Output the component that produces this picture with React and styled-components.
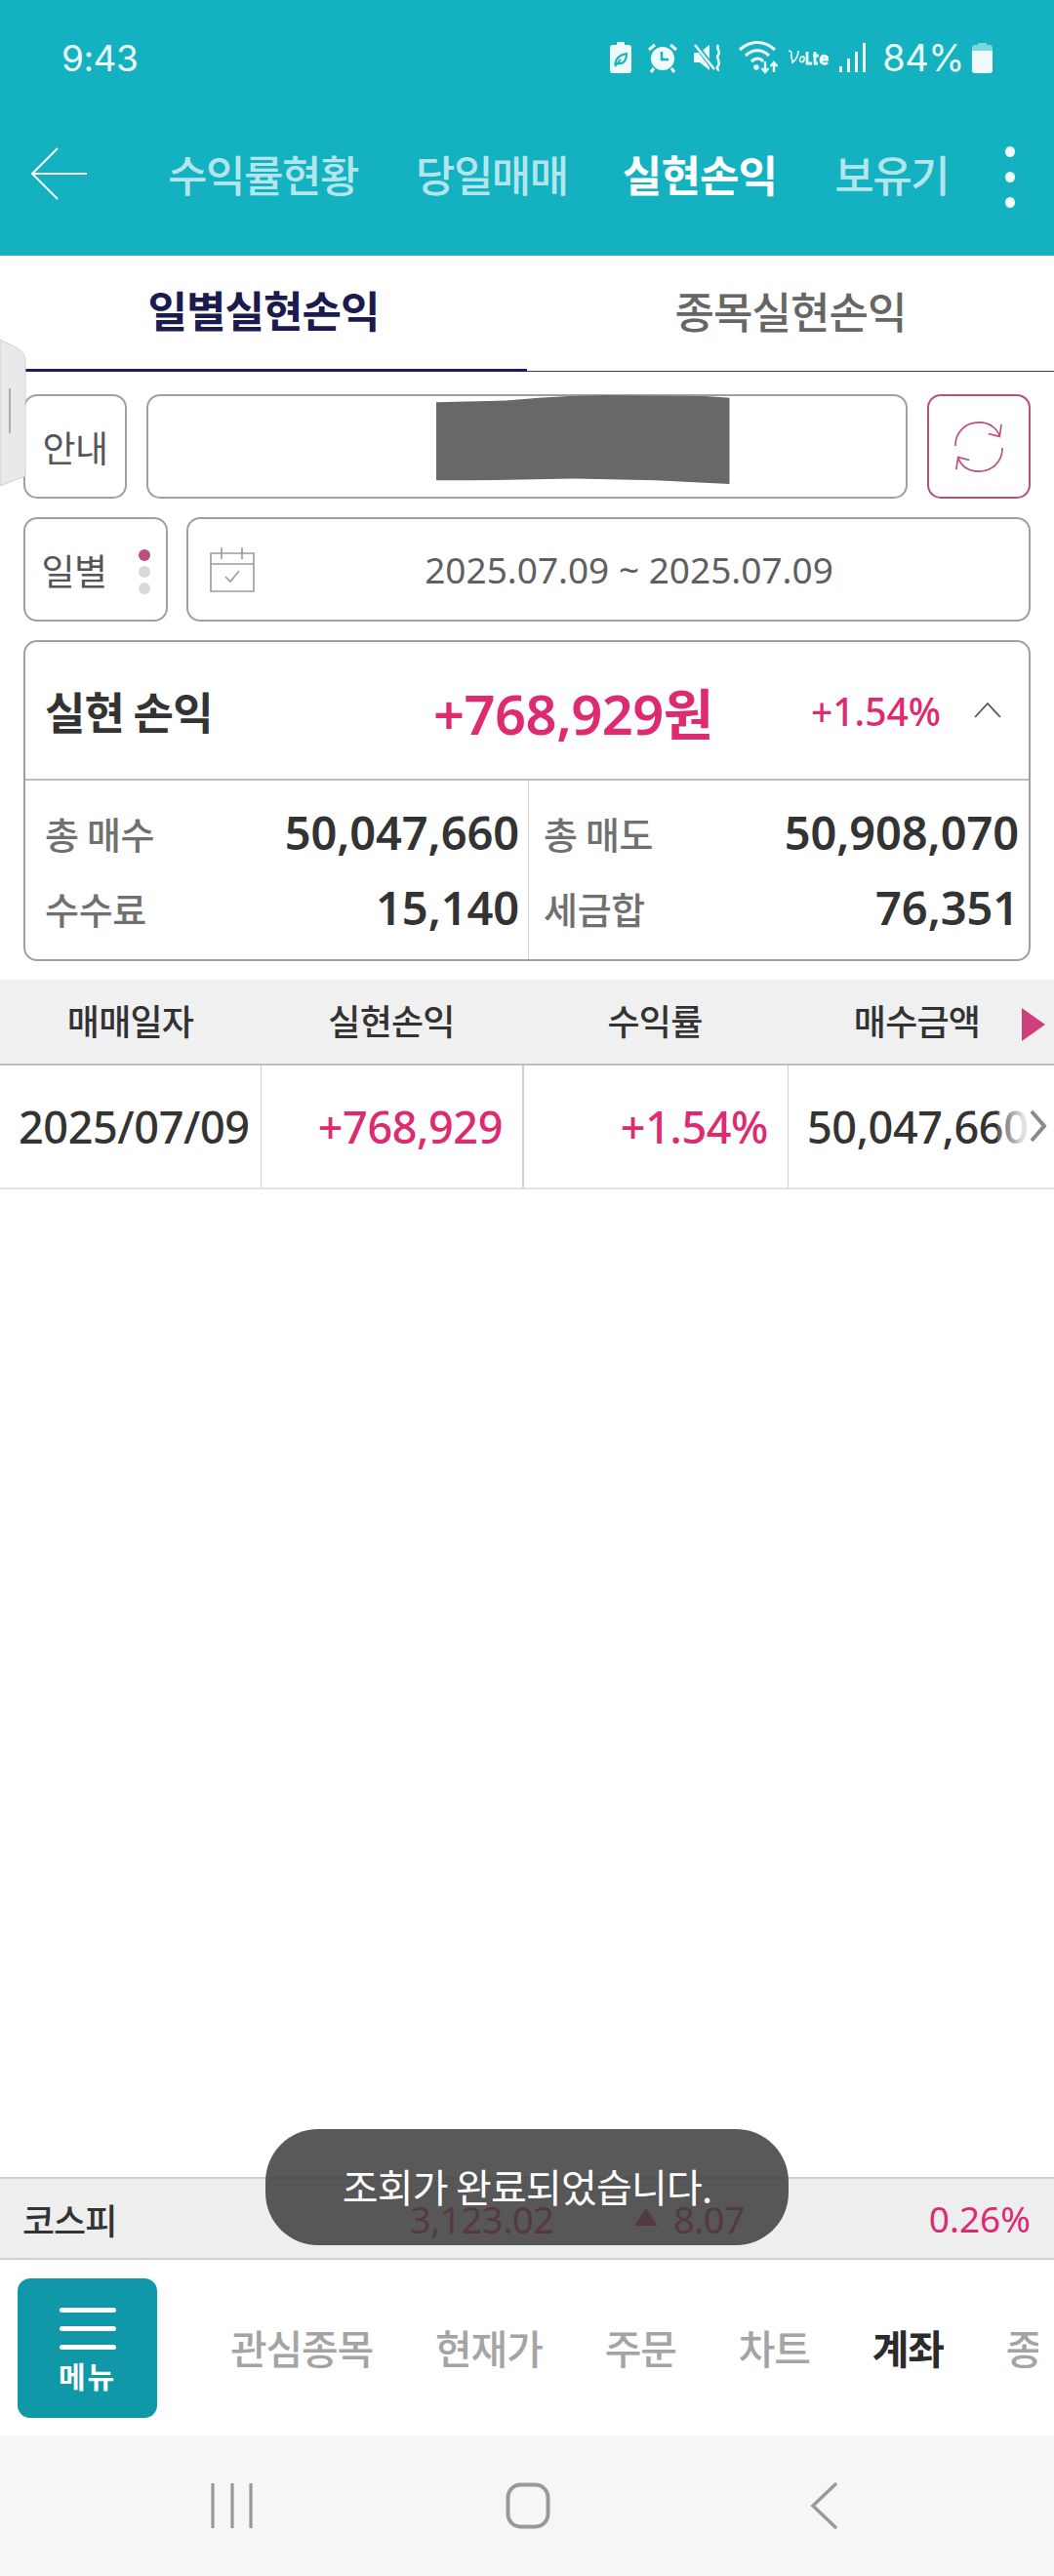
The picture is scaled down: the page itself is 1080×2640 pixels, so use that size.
import React from 'react';
import styled, { createGlobalStyle } from 'styled-components';

const Global = createGlobalStyle`
  html, body { margin: 0; padding: 0; background: #fff; }
  * { box-sizing: border-box; }
  body { font-family: "Noto Sans CJK KR", "Noto Sans", sans-serif; }
`;
const Page = styled.div`
  position: relative; width: 1080px; height: 2640px; overflow: hidden;
  display: flex; flex-direction: column; background: #fff;
`;
const Header = styled.header`height: 262px; background: #14b1c1; flex: none; display: flex; flex-direction: column;`;
const StatusBar = styled.div`height: 118px; display: flex; align-items: center; padding: 0 63px 0 63px;`;
const Time = styled.span`font: 400 37px/1 "Inter", sans-serif; color: #eafafb; flex: 1; letter-spacing: -0.5px;`;
const StatusIcons = styled.div`display: flex; align-items: center; height: 40px;`;
const Pct = styled.span`font: 400 38px/1 "Inter", sans-serif; color: #eafafb; margin: 0 8px 0 16px; letter-spacing: -0.5px;`;
const NavRow = styled.nav`height: 100px; display: flex; align-items: center; padding-left: 31px; margin-top: 10px; position: relative;`;
const BackIcon = styled.svg`width: 58px; height: 54px; flex: none; margin-right: 83px;`;
const NavTabs = styled.div`display: flex; gap: 59px; white-space: nowrap;`;
const NavTab = styled.span`
  font-size: 44px; line-height: 1; letter-spacing: ${p => (p.$on ? '-0.9px' : '-1.5px')};
  font-weight: ${p => (p.$on ? 700 : 500)};
  color: ${p => (p.$on ? '#ffffff' : '#b3e6ec')};
  margin-left: ${p => (p.$on ? '-3px' : '0')};
`;
const Dots = styled.div`position: absolute; left: 1030px; top: 22px; display: flex; flex-direction: column; gap: 15px;`;
const Dot = styled.i`width: 10px; height: 11px; border-radius: 50%; background: #f2fbfc; display: block;`;

const SubTabs = styled.div`height: 119px; display: flex; flex: none;`;
const SubTab = styled.div`
  width: 540px; display: flex; align-items: center; justify-content: center; padding-bottom: 6px;
  font-size: 44px; letter-spacing: -1px;
  font-weight: ${p => (p.$on ? 700 : 500)};
  color: ${p => (p.$on ? '#1c1b50' : '#666')};
  border-bottom: ${p => (p.$on ? '3px solid #1f1d57' : '1px solid #3d3c5a')};
  height: ${p => (p.$on ? '119px' : '118.5px')};
`;
const Body = styled.main`padding: 23px 24px 0; display: flex; flex-direction: column; gap: 19px; flex: none;`;
const Row = styled.div`display: flex; height: 107px; gap: ${p => p.$gap}px;`;
const Box = styled.div`
  border: 2px solid ${p => (p.$accent ? '#b94f7c' : '#a0a0a0')}; border-radius: 14px; background: #fff;
  display: flex; align-items: center; justify-content: center; flex: ${p => (p.$w ? `0 0 ${p.$w}px` : 1)};
  position: relative; font-size: 37px; color: #555; letter-spacing: -0.5px;
`;
const Redacted = styled.div`
  width: 301px; height: 91px; background: #686868; align-self: flex-start; margin: -1px 0 0 114px;
  clip-path: polygon(0 8%, 24% 6%, 35% 3%, 45% 1%, 58% 0, 92% 1%, 100% 3%, 100% 100%, 88% 98%, 75% 96%, 47% 94%, 12% 96%, 0 96%);
`;
const Ticks = styled.div`display: flex; flex-direction: column; gap: 5px; margin-left: 32px; margin-top: 4px;`;
const Tick = styled.i`width: 12px; height: 12px; border-radius: 50%; display: block; background: ${p => (p.$on ? '#bc5080' : '#d9d9d9')};`;
const DateField = styled.div`display: flex; align-items: center; width: 100%; padding-left: 22px;`;
const DateText = styled.span`flex: 1; text-align: center; font-size: 37px; color: #5f5f5f; letter-spacing: 0; font-family: "Noto Sans", sans-serif; padding-right: 26px;`;

const Card = styled.section`border: 2px solid #a0a0a0; border-radius: 14px; height: 329px; display: flex; flex-direction: column;`;
const CardHead = styled.div`height: 142px; display: flex; align-items: center; border-bottom: 2px solid #bdbdbd; padding: 0 28px 0 20px; flex: none;`;
const CardTitle = styled.h2`margin: 0; font-size: 45px; font-weight: 700; color: #333; letter-spacing: -0.8px; width: 398px;`;
const Gain = styled.span`font-size: 56px; font-weight: 600; color: #dd2a70; letter-spacing: -0.5px; width: 387px; font-family: "Noto Sans", "Noto Sans CJK KR", sans-serif;`;
const GainPct = styled.span`font-size: 39px; font-weight: 500; color: #dd2a70; font-family: "Noto Sans", sans-serif; flex: 1; letter-spacing: 0;`;
const CardGrid = styled.div`flex: 1; display: grid; grid-template-columns: 515px 1fr;`;
const Cell = styled.div`
  display: flex; flex-direction: column; justify-content: center; gap: 22px; padding: 0 ${p => (p.$r ? '10px' : '9px')} 0 ${p => (p.$r ? '15px' : '20px')};
  border-left: ${p => (p.$r ? '1px solid #d4d4d4' : 'none')};
`;
const Stat = styled.div`display: flex; justify-content: space-between; align-items: center; height: 55px;`;
const StatLabel = styled.span`font-size: 38px; font-weight: 500; color: #707070; letter-spacing: -0.3px;`;
const StatValue = styled.span`font: 600 47px/1 "Noto Sans", sans-serif; color: #333; letter-spacing: -0.1px;`;

const Table = styled.section`margin-top: 19px; flex: none;`;
const TableHead = styled.div`height: 88px; background: #f0f0f0; display: grid; grid-template-columns: 267px 268px 272px 273px; border-bottom: 2px solid #bdbdbd; position: relative;`;
const Th = styled.div`display: flex; align-items: center; justify-content: center; font-size: 36px; font-weight: 500; color: #333; letter-spacing: -0.8px; padding-bottom: 4px; padding-right: ${p => (p.$pad ? 8 : 0)}px;`;
const MoreArrow = styled.svg`position: absolute; right: 9px; top: 29px; width: 24px; height: 34px;`;
const TableRow = styled.div`height: 127px; display: grid; grid-template-columns: 267px 268px 272px 273px; border-bottom: 2px solid #e2e2e2; position: relative;`;
const Td = styled.div`
  display: flex; align-items: center; justify-content: ${p => (p.$left ? 'flex-start' : 'flex-end')};
  padding: 0 ${p => (p.$left ? 0 : 20)}px 0 ${p => (p.$left ? 19 : 0)}px;
  font: 500 45px/1 "Noto Sans", sans-serif; color: ${p => (p.$red ? '#dd2a70' : '#333')};
  border-left: ${p => (p.$line ? `${p.$line}px solid #cfcfcf` : 'none')}; overflow: hidden; white-space: nowrap; letter-spacing: -0.4px;
`;
const RowChevron = styled.svg`position: absolute; right: 0; top: 36px; width: 58px; height: 52px;`;
const Spacer = styled.div`flex: 1;`;

const Ticker = styled.div`height: 85px; flex: none; background: #eeeeee; border-top: 2px solid #cfcfcf; border-bottom: 2px solid #d2d2d2; display: flex; align-items: center; padding: 0 24px 0 23px;`;
const TickerName = styled.span`font-size: 36px; font-weight: 500; color: #333; letter-spacing: -1px; width: 397px;`;
const TickerVal = styled.span`font: 400 38px/1 "Noto Sans", sans-serif; color: #dd2a70; width: 230px; letter-spacing: -0.4px;`;
const TickerDelta = styled.span`font: 400 38px/1 "Noto Sans", sans-serif; color: #dd2a70; flex: 1; display: flex; align-items: center; gap: 16px; letter-spacing: -0.6px;`;
const TriUp = styled.i`width: 0; height: 0; border-left: 12px solid transparent; border-right: 12px solid transparent; border-bottom: 18px solid #dd2a70; display: block; margin-top: -4px;`;
const TickerPct = styled.span`font: 400 37px/1 "Noto Sans", sans-serif; color: #dd2a70;`;

const BottomBar = styled.div`height: 180px; flex: none; display: flex; align-items: center; padding: 0 16px 0 18px; overflow: hidden;`;
const MenuBtn = styled.div`width: 143px; height: 143px; border-radius: 13px; background: #1097a8; flex: none; display: flex; flex-direction: column; align-items: center; color: #fff; padding-top: 30px; margin-right: 75px;`;
const Bar = styled.i`width: 58px; height: 5px; border-radius: 3px; background: #fff; display: block; margin-bottom: 14px;`;
const MenuLabel = styled.span`font-size: 30px; font-weight: 700; line-height: 1; letter-spacing: 2px; margin-top: -3px;`;
const BottomTabs = styled.div`display: flex; flex: 1; min-width: 0; overflow: hidden; gap: 64px; white-space: nowrap; margin-top: -3px;`;
const BottomTab = styled.span`font-size: 41px; letter-spacing: -1.2px; font-weight: ${p => (p.$on ? 700 : 500)}; color: ${p => (p.$on ? '#2b2b2b' : '#a4a4a4')};`;
const SysNav = styled.div`height: 144px; flex: none; background: #f5f6f8; display: flex; align-items: center;`;
const SysSlot = styled.div`flex: none; width: ${p => p.$w}px; display: flex; padding-left: ${p => p.$l || 0}px;`;

const Handle = styled.svg`position: absolute; left: 0; top: 348px; width: 28px; height: 150px;`;
const Toast = styled.div`
  position: absolute; left: 272px; top: 2182px; width: 536px; height: 119px; border-radius: 54px;
  background: rgba(60,60,60,0.85); color: #fff; display: flex; justify-content: center; padding-top: 34px;
  font-size: 40px; line-height: 1.2; letter-spacing: -0.8px; font-weight: 400;
`;

const c = '#eefafb';
const App = () => (
  <Page>
    <Global />
    <Header>
      <StatusBar>
        <Time>9:43</Time>
        <StatusIcons>
          <svg width="24" height="34" viewBox="0 0 24 34"><path d="M8 1h8v3h4a3 3 0 0 1 3 3v23a3 3 0 0 1-3 3H4a3 3 0 0 1-3-3V7a3 3 0 0 1 3-3h4z" fill={c}/><path d="M6 24c1-6 5-10 12-11 0 7-3 11-9 10M6 26l6-7" fill="none" stroke="#14b1c1" strokeWidth="2"/></svg>
          <svg style={{marginLeft:15}} width="32" height="32" viewBox="0 0 32 32"><circle cx="16" cy="17" r="12" fill={c}/><path d="M2 8l6-5M30 8l-6-5M7 27l-3 4M25 27l3 4" stroke={c} strokeWidth="3" fill="none"/><path d="M15 10v8h7" stroke="#14b1c1" strokeWidth="2.5" fill="none"/></svg>
          <svg style={{marginLeft:15}} width="32" height="32" viewBox="0 0 32 32"><path d="M1 11h6l10-8v26l-10-8H1z" fill={c}/><path d="M2 2l20 26" stroke="#14b1c1" strokeWidth="5"/><path d="M2 3l20 25" stroke={c} strokeWidth="2.5"/><path d="M26 3c-3 4 3 6 0 10s3 7 0 11 1 5 1 5" fill="none" stroke={c} strokeWidth="2.5"/></svg>
          <svg style={{marginLeft:14}} width="42" height="36" viewBox="0 0 42 36"><path d="M2 10c11-10 25-10 36 0M8 16c7-7 17-7 24 0M14 22c4-4 9-4 12 0" fill="none" stroke={c} strokeWidth="3.2"/><circle cx="19" cy="28" r="2.8" fill={c}/><path d="M28 22v11M24.500 29l3.500 4 3.500-4M37 33V23M33.500 27l3.500-4 3.500 4" fill="none" stroke={c} strokeWidth="2.4"/></svg>
          <svg style={{marginLeft:9}} width="42" height="22" viewBox="0 0 42 22"><path d="M1 4c3 0 3 2 3 6l1 6c4-3 6-7 6-12M13 12c-2 4 3 5 4 1s-3-4-4-1" fill="none" stroke={c} strokeWidth="1.6"/><path d="M20 5v12h5M28 5v12h3M26 9h6M34 13h7c0-5-7-5-7 0s5 5 7 3" fill="none" stroke={c} strokeWidth="2.8"/></svg>
          <svg style={{marginLeft:11}} width="28" height="30" viewBox="0 0 28 30"><rect x="0" y="24" width="3" height="6" fill={c}/><rect x="8" y="16" width="3" height="14" fill={c}/><rect x="16" y="9" width="3" height="21" fill={c}/><rect x="24" y="0" width="3" height="30" fill={c}/></svg>
          <Pct>84%</Pct>
          <svg width="21" height="31" viewBox="0 0 21 31"><path d="M6 0h9v2h3a3 3 0 0 1 3 3v3H0V5a3 3 0 0 1 3-3h3z" fill="#7fd5de"/><path d="M0 8h21v20a3 3 0 0 1-3 3H3a3 3 0 0 1-3-3z" fill={c}/></svg>
        </StatusIcons>
      </StatusBar>
      <NavRow>
        <BackIcon viewBox="0 0 58 54"><path d="M28 1L2 27l26 26M2 27h56" fill="none" stroke="#fff" strokeWidth="2"/></BackIcon>
        <NavTabs>
          <NavTab>수익률현황</NavTab><NavTab>당일매매</NavTab><NavTab $on>실현손익</NavTab><NavTab>보유기</NavTab>
        </NavTabs>
        <Dots><Dot /><Dot /><Dot /></Dots>
      </NavRow>
    </Header>
    <SubTabs>
      <SubTab $on>일별실현손익</SubTab><SubTab>종목실현손익</SubTab>
    </SubTabs>
    <Body>
      <Row $gap={20}>
        <Box $w={106}>안내</Box>
        <Box><Redacted /></Box>
        <Box $w={106} $accent>
          <svg width="54" height="56" viewBox="0 0 56 56"><path d="M3 27C3 12 14 2 28 2c10 0 18 5 22 14M53 29c0 15-11 25-25 25-10 0-18-5-22-14" fill="none" stroke="#b94f7c" strokeWidth="1.7"/><path d="M52 4l-2 13-12-3M4 52l2-13 12 3" fill="none" stroke="#b94f7c" strokeWidth="1.7"/></svg>
        </Box>
      </Row>
      <Row $gap={19}>
        <Box $w={148}>일별<Ticks><Tick $on /><Tick /><Tick /></Ticks></Box>
        <Box>
          <DateField>
            <svg width="46" height="46" viewBox="0 0 46 46"><path d="M1 6h44v39H1zM1 17h44M12 0v12M33 0v12" fill="none" stroke="#9a9a9a" strokeWidth="1.6"/><path d="M16 30l5 5 9-11" fill="none" stroke="#9a9a9a" strokeWidth="1.6"/></svg>
            <DateText>2025.07.09 ~ 2025.07.09</DateText>
          </DateField>
        </Box>
      </Row>
      <Card>
        <CardHead>
          <CardTitle>실현 손익</CardTitle>
          <Gain>+768,929원</Gain>
          <GainPct>+1.54%</GainPct>
          <svg width="28" height="16" viewBox="0 0 28 16"><path d="M1 15L14 1l13 14" fill="none" stroke="#555" strokeWidth="1.8"/></svg>
        </CardHead>
        <CardGrid>
          <Cell>
            <Stat><StatLabel>총 매수</StatLabel><StatValue>50,047,660</StatValue></Stat>
            <Stat><StatLabel>수수료</StatLabel><StatValue>15,140</StatValue></Stat>
          </Cell>
          <Cell $r>
            <Stat><StatLabel>총 매도</StatLabel><StatValue>50,908,070</StatValue></Stat>
            <Stat><StatLabel>세금합</StatLabel><StatValue>76,351</StatValue></Stat>
          </Cell>
        </CardGrid>
      </Card>
    </Body>
    <Table>
      <TableHead>
        <Th>매매일자</Th><Th>실현손익</Th><Th>수익률</Th><Th $pad>매수금액</Th>
        <MoreArrow viewBox="0 0 22 30" preserveAspectRatio="none"><path d="M0 0l22 15L0 30z" fill="#cf3f7c"/></MoreArrow>
      </TableHead>
      <TableRow>
        <Td $left>2025/07/09</Td>
        <Td $red $line={1}>+768,929</Td>
        <Td $red $line={2}>+1.54%</Td>
        <Td $left $line={1}>50,047,660</Td>
        <RowChevron viewBox="0 0 58 52">
          <defs><linearGradient id="fade" x1="0" x2="1" y1="0" y2="0"><stop offset="0" stopColor="#fff" stopOpacity=".2"/><stop offset=".45" stopColor="#fff" stopOpacity=".85"/><stop offset="1" stopColor="#fff"/></linearGradient></defs>
          <rect width="58" height="52" fill="url(#fade)"/>
          <path d="M35 11l13 15-13 15" fill="none" stroke="#8a8a8a" strokeWidth="4"/>
        </RowChevron>
      </TableRow>
    </Table>
    <Spacer />
    <Ticker>
      <TickerName>코스피</TickerName>
      <TickerVal>3,123.02</TickerVal>
      <TickerDelta><TriUp />8.07</TickerDelta>
      <TickerPct>0.26%</TickerPct>
    </Ticker>
    <BottomBar>
      <MenuBtn><Bar /><Bar /><Bar /><MenuLabel>메뉴</MenuLabel></MenuBtn>
      <BottomTabs>
        <BottomTab>관심종목</BottomTab><BottomTab>현재가</BottomTab><BottomTab>주문</BottomTab><BottomTab>차트</BottomTab><BottomTab $on>계좌</BottomTab><BottomTab>종합</BottomTab>
      </BottomTabs>
    </BottomBar>
    <SysNav>
      <SysSlot $w={218} $l={216}><svg width="44" height="46" viewBox="0 0 44 46" style={{flex:'none'}}><path d="M2 1v44M22 1v44M41 1v44" stroke="#999" strokeWidth="3.2" fill="none" strokeLinecap="round"/></svg></SysSlot>
      <SysSlot $w={300} $l={300}><svg width="46" height="48" viewBox="0 0 46 48" style={{flex:'none'}}><rect x="2.500" y="2.500" width="41" height="43" rx="13" fill="none" stroke="#999" strokeWidth="4"/></svg></SysSlot>
      <SysSlot $w={300} $l={312}><svg width="28" height="48" viewBox="0 0 28 48" style={{flex:'none'}}><path d="M26 2L3 24l23 22" stroke="#999" strokeWidth="3.500" fill="none" strokeLinecap="round"/></svg></SysSlot>
    </SysNav>
    <Handle viewBox="0 0 28 150"><path d="M0 0l18 9q8 5 8 14v117L0 150z" fill="#e9e9e9" stroke="#d0d0d0"/><rect x="9" y="50" width="2" height="46" fill="#aaa"/></Handle>
    <Toast>조회가 완료되었습니다.</Toast>
  </Page>
);
export default App;
